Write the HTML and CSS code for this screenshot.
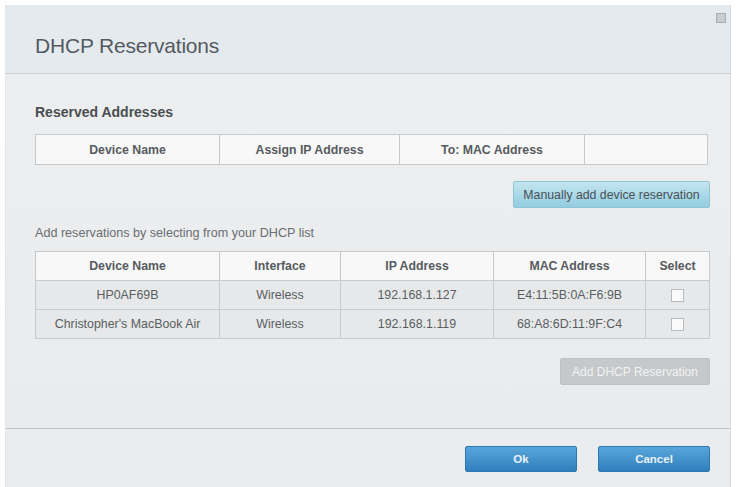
FILE: index.html
```html
<!DOCTYPE html>
<html lang="en">
<head>
  <meta charset="UTF-8" />
  <title>DHCP Reservations</title>
  <link rel="stylesheet" href="styles.css">
</head>
<body>

  <div class="dialog">
    <div class="dialog-head">
      <h1>DHCP Reservations</h1>
      <span class="close-btn" title="Close"></span>
    </div>

    <div class="dialog-body">
      <h2>Reserved Addresses</h2>
      <table class="grid reserved">
        <tr>
          <th class="c1">Device Name</th>
          <th class="c2">Assign IP Address</th>
          <th class="c3">To: MAC Address</th>
          <th></th>
        </tr>
      </table>

      <div class="btn-row">
        <button class="btn-light">Manually add device reservation</button>
      </div>

      <p class="hint">Add reservations by selecting from your DHCP list</p>

      <table class="grid clients">
        <tr>
          <th class="d1">Device Name</th>
          <th class="d2">Interface</th>
          <th class="d3">IP Address</th>
          <th class="d4">MAC Address</th>
          <th>Select</th>
        </tr>
        <tr>
          <td>HP0AF69B</td>
          <td>Wireless</td>
          <td>192.168.1.127</td>
          <td>E4:11:5B:0A:F6:9B</td>
          <td><span class="check"></span></td>
        </tr>
        <tr>
          <td>Christopher's MacBook Air</td>
          <td>Wireless</td>
          <td>192.168.1.119</td>
          <td>68:A8:6D:11:9F:C4</td>
          <td><span class="check"></span></td>
        </tr>
      </table>

      <div class="btn-row">
        <button class="btn-disabled" disabled>Add DHCP Reservation</button>
      </div>
    </div>

    <div class="dialog-foot">
      <button class="btn-blue">Ok</button>
      <button class="btn-blue">Cancel</button>
    </div>
  </div>

</body>
</html>
```

FILE: styles.css
```css
body {
  margin: 0;
  background: #ffffff;
  font-family: "Liberation Sans", Arial, sans-serif;
  color: #555;
}

.dialog {
  margin: 5px 5px 0 5px;
  width: 726px;
  height: 482px;
  border-left: 1px solid #e2e6ea;
  border-right: 1px solid #d8dcdf;
  background: #eceeef;
  display: flex;
  flex-direction: column;
  box-sizing: border-box;
}

.dialog-head {
  position: relative;
  height: 69px;
  background: #e5eaef;
  border-bottom: 1px solid #c9cdd1;
  padding-left: 29px;
  box-sizing: border-box;
}

h1 {
  margin: 0;
  padding-top: 29px;
  font-size: 21px;
  font-weight: normal;
  color: #545a60;
  letter-spacing: -0.2px;
}

.close-btn {
  position: absolute;
  top: 8px;
  right: 4px;
  width: 8px;
  height: 8px;
  border: 1px solid #a9aeb2;
  background: #c9cdd0;
}

.dialog-body {
  flex: 1;
  padding: 0 20px 0 29px;
  background: linear-gradient(#eceeef, #e9ebec);
  border-bottom: 1px solid #c2c6c9;
}

h2 {
  margin: 0;
  padding-top: 30px;
  font-size: 14px;
  color: #4a4e52;
}

.grid {
  border-collapse: collapse;
  font-size: 12.3px;
  color: #555;
}

.grid th, .grid td {
  border: 1px solid #c8cbcd;
  text-align: center;
  padding: 0;
}

.grid th {
  background: #f8f8f8;
  font-weight: bold;
  color: #575b5f;
}

.reserved {
  margin-top: 14px;
  width: 673px;
}

.reserved th {
  height: 29px;
}

.reserved .c1 { width: 183px; }
.reserved .c2 { width: 179px; }
.reserved .c3 { width: 184px; }

.btn-row {
  display: flex;
  justify-content: flex-end;
}

.btn-light {
  margin-top: 16px;
  width: 197px;
  height: 27px;
  border: 1px solid #8fc3d6;
  border-radius: 2px;
  background: linear-gradient(#c4e5ef, #92cde0);
  color: #4a5055;
  font-family: inherit;
  font-size: 12.3px;
}

.hint {
  margin: 18px 0 0 0;
  font-size: 12.6px;
  color: #6a6e72;
}

.clients {
  margin-top: 11px;
  width: 675px;
}

.clients th {
  height: 28px;
}

.clients td {
  height: 28px;
  background: #e6e8e9;
  color: #5a5e62;
  font-size: 12.4px;
}

.clients .d1 { width: 183px; }
.clients .d2 { width: 120px; }
.clients .d3 { width: 152px; }
.clients .d4 { width: 151px; }

.check {
  display: inline-block;
  width: 11px;
  height: 11px;
  background: #fbfbfb;
  border: 1px solid #b9bcbe;
  vertical-align: middle;
}

.btn-disabled {
  margin-top: 19px;
  width: 150px;
  height: 27px;
  border: 1px solid #bfc2c4;
  border-radius: 2px;
  background: #c6c9cb;
  color: #f2f2f2;
  font-family: inherit;
  font-size: 12px;
}

.dialog-foot {
  height: 58px;
  display: flex;
  justify-content: flex-end;
  gap: 21px;
  padding: 17px 20px 0 0;
  box-sizing: border-box;
  background: #eaeced;
}

.btn-blue {
  width: 112px;
  height: 26px;
  border: 1px solid #2c78b0;
  border-radius: 2px;
  background: linear-gradient(#58a6da, #2f7fbd);
  color: #eaf2f8;
  font-family: inherit;
  font-size: 11.5px;
  font-weight: bold;
}
```
